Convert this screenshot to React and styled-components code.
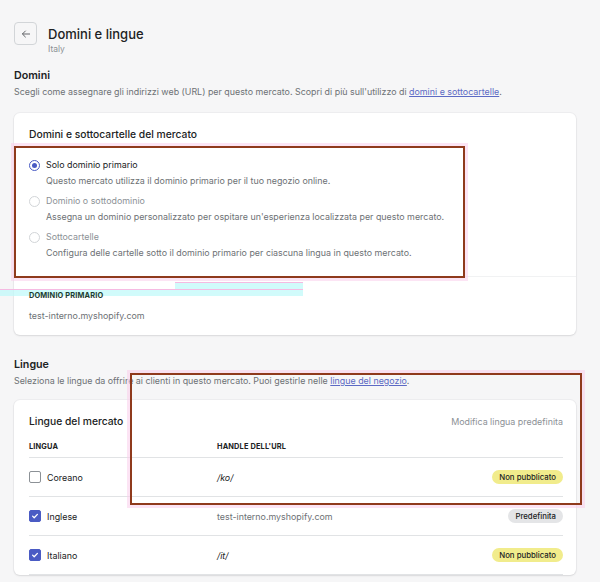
import React from 'react'
import styled, { createGlobalStyle } from 'styled-components'

const Global = createGlobalStyle`
  html, body {
    margin: 0;
    background: #f6f6f7;
    font-family: Inter, "Noto Sans", sans-serif;
    color: #202223;
  }
`

const Page = styled.div`
  position: relative;
  width: 600px;
  height: 582px;
  overflow: hidden;
  box-sizing: border-box;
  padding: 22px 24px 0 14px;
`

const Header = styled.div`
  display: flex;
  align-items: flex-start;
  gap: 11px;
`

const BackButton = styled.button`
  width: 23px;
  height: 23px;
  padding: 0;
  border: 1px solid #d2d5d8;
  border-radius: 4px;
  background: #f6f6f7;
  display: flex;
  align-items: center;
  justify-content: center;
  color: #5c5f62;
`

const TitleBlock = styled.div`
  display: flex;
  flex-direction: column;
  padding-top: 3px;
`

const Title = styled.h1`
  margin: 0;
  font-size: 13px;
  line-height: 18px;
  font-weight: 500;
`

const Subtitle = styled.div`
  font-size: 8.5px;
  line-height: 13px;
  color: #8c9196;
`

const Section = styled.section`
  margin-top: ${p => p.$top}px;
`

const SectionTitle = styled.h2`
  margin: 0;
  font-size: 10.7px;
  line-height: 16px;
  font-weight: 600;
`

const SectionText = styled.p`
  margin: 1px 0 0;
  font-size: 8.9px;
  line-height: 14px;
  color: #6d7175;
`

const Link = styled.a`
  color: #5c6ac4;
  text-decoration: underline;
`

const Card = styled.div`
  margin-top: ${p => p.$top}px;
  background: #fff;
  border-radius: 6px;
  box-shadow: 0 0 0 1px rgba(63, 63, 68, 0.04), 0 1px 2px rgba(63, 63, 68, 0.12);
  overflow: hidden;
`

const CardBody = styled.div`
  padding: ${p => p.$pad || '13px 14px 14px 15px'};
`

const CardHead = styled.div`
  display: flex;
  justify-content: space-between;
  align-items: center;
`

const CardTitle = styled.h3`
  margin: 0;
  font-size: 10.3px;
  line-height: 16px;
  font-weight: 500;
`

const Action = styled.span`
  font-size: 8.9px;
  color: #8c9196;
`

const RadioList = styled.div`
  display: flex;
  flex-direction: column;
  gap: 4px;
  margin-top: 15px;
`

const RadioRow = styled.div`
  display: grid;
  grid-template-columns: 17px 1fr;
  align-items: center;
`

const Radio = styled.span`
  width: 9px;
  height: 9px;
  border-radius: 50%;
  border: 1px solid ${p => (p.$on ? '#4a5bc4' : '#d2d5d8')};
  box-sizing: content-box;
  display: flex;
  align-items: center;
  justify-content: center;
  &::after {
    content: '';
    width: 5px;
    height: 5px;
    border-radius: 50%;
    background: ${p => (p.$on ? '#4a5bc4' : 'transparent')};
  }
`

const RadioLabel = styled.span`
  font-size: 8.9px;
  line-height: 16px;
  color: ${p => (p.$muted ? '#8c9196' : '#202223')};
`

const RadioHelp = styled.span`
  grid-column: 2;
  font-size: 8.9px;
  line-height: 16px;
  color: #6d7175;
`

const Divider = styled.div`
  height: 1px;
  background: #f1f2f3;
`

const Eyebrow = styled.div`
  position: relative;
  z-index: 2;
  font-size: 7.4px;
  line-height: 12px;
  font-weight: 700;
  letter-spacing: 0.15px;
  text-transform: uppercase;
  color: #1d3b2f;
`

const Value = styled.div`
  margin-top: 7px;
  font-size: 8.9px;
  line-height: 14px;
  color: #6d7175;
`

const Table = styled.div`
  margin-top: 12px;
`

const TableHead = styled.div`
  display: grid;
  grid-template-columns: 188px 1fr auto;
  height: 16px;
  align-items: start;
  border-bottom: 1px solid #e1e3e5;
`

const Th = styled.span`
  font-size: 7.4px;
  font-weight: 700;
  letter-spacing: 0.15px;
  color: #202223;
  line-height: 12px;
`

const Row = styled.div`
  display: grid;
  grid-template-columns: 188px 1fr auto;
  height: 38px;
  align-items: center;
  border-bottom: 1px solid #e1e3e5;
`

const LangCell = styled.span`
  display: flex;
  align-items: center;
  gap: 6px;
  font-size: 8.9px;
  color: #202223;
`

const Checkbox = styled.span`
  width: 10px;
  height: 10px;
  border-radius: 2px;
  border: 1px solid ${p => (p.$on ? '#4a5bc4' : '#8c9196')};
  background: ${p => (p.$on ? '#4a5bc4' : '#fff')};
  display: flex;
  align-items: center;
  justify-content: center;
`

const Handle = styled.span`
  font-size: 8.9px;
  color: ${p => (p.$plain ? '#6d7175' : '#202223')};
  font-style: ${p => (p.$plain ? 'normal' : 'italic')};
`

const Badge = styled.span`
  font-size: 7.8px;
  line-height: 14px;
  padding: 0 7px;
  border-radius: 8px;
  font-weight: 500;
  background: ${p => (p.$tone === 'warn' ? '#f1ec8c' : '#e4e5e7')};
  color: #202223;
`

const Mark = styled.div`
  position: absolute;
  box-sizing: border-box;
  left: ${p => p.$x}px;
  top: ${p => p.$y}px;
  width: ${p => p.$w}px;
  height: ${p => p.$h}px;
  border: 2px solid #8f3a1c;
  box-shadow: 0 0 0 3px rgba(250, 205, 235, 0.55);
  pointer-events: none;
`

const Ghost = styled.div`
  position: absolute;
  z-index: 1;
  left: ${p => p.$x}px;
  top: ${p => p.$y}px;
  width: ${p => p.$w}px;
  height: ${p => p.$h}px;
  background: rgba(190, 250, 250, 0.7);
  border-top: 1px solid rgba(255, 170, 220, 0.8);
  pointer-events: none;
`

const Tick = () => (
  <svg width="8" height="8" viewBox="0 0 10 10">
    <path d="M2 5.2l2 2L8 3" fill="none" stroke="#fff" strokeWidth="1.6" strokeLinecap="round" strokeLinejoin="round" />
  </svg>
)

const options = [
  { label: 'Solo dominio primario', help: 'Questo mercato utilizza il dominio primario per il tuo negozio online.', on: true },
  { label: 'Dominio o sottodominio', help: "Assegna un dominio personalizzato per ospitare un'esperienza localizzata per questo mercato." },
  { label: 'Sottocartelle', help: 'Configura delle cartelle sotto il dominio primario per ciascuna lingua in questo mercato.' },
]

const languages = [
  { name: 'Coreano', handle: '/ko/', badge: 'Non pubblicato', tone: 'warn' },
  { name: 'Inglese', handle: 'test-interno.myshopify.com', badge: 'Predefinita', on: true, plain: true },
  { name: 'Italiano', handle: '/it/', badge: 'Non pubblicato', tone: 'warn', on: true },
]

export default function App() {
  return (
    <Page>
      <Global />
      <Header>
        <BackButton aria-label="Indietro">
          <svg width="12" height="12" viewBox="0 0 20 20">
            <path d="M16 10H4.5M9 5l-5 5 5 5" fill="none" stroke="currentColor" strokeWidth="1.6" strokeLinecap="round" strokeLinejoin="round" />
          </svg>
        </BackButton>
        <TitleBlock>
          <Title>Domini e lingue</Title>
          <Subtitle>Italy</Subtitle>
        </TitleBlock>
      </Header>

      <Section $top={12}>
        <SectionTitle>Domini</SectionTitle>
        <SectionText>
          Scegli come assegnare gli indirizzi web (URL) per questo mercato. Scopri di più sull'utilizzo di{' '}
          <Link href="#">domini e sottocartelle</Link>.
        </SectionText>
      </Section>

      <Card $top={14}>
        <CardBody $pad="13px 14px 15px 15px">
          <CardTitle>Domini e sottocartelle del mercato</CardTitle>
          <RadioList>
            {options.map(o => (
              <RadioRow key={o.label}>
                <Radio $on={o.on} />
                <RadioLabel $muted={!o.on}>{o.label}</RadioLabel>
                <RadioHelp>{o.help}</RadioHelp>
              </RadioRow>
            ))}
          </RadioList>
        </CardBody>
        <Divider />
        <CardBody $pad="13px 14px 12px 15px">
          <Eyebrow>Dominio primario</Eyebrow>
          <Value>test-interno.myshopify.com</Value>
        </CardBody>
      </Card>

      <Section $top={22}>
        <SectionTitle>Lingue</SectionTitle>
        <SectionText>
          Seleziona le lingue da offrire ai clienti in questo mercato. Puoi gestirle nelle{' '}
          <Link href="#">lingue del negozio</Link>.
        </SectionText>
      </Section>

      <Card $top={12}>
        <CardBody $pad="13px 13px 0 15px">
          <CardHead>
            <CardTitle>Lingue del mercato</CardTitle>
            <Action>Modifica lingua predefinita</Action>
          </CardHead>
          <Table>
            <TableHead>
              <Th>LINGUA</Th>
              <Th>HANDLE DELL'URL</Th>
              <span />
            </TableHead>
            {languages.map(l => (
              <Row key={l.name}>
                <LangCell>
                  <Checkbox $on={l.on}>{l.on && <Tick />}</Checkbox>
                  {l.name}
                </LangCell>
                <Handle $plain={l.plain}>{l.handle}</Handle>
                <Badge $tone={l.tone}>{l.badge}</Badge>
              </Row>
            ))}
          </Table>
        </CardBody>
      </Card>

      <Mark $x={14} $y={146} $w={451} $h={132} />
      <Mark $x={130} $y={373} $w={452} $h={132} />
      <Ghost $x={175} $y={282} $w={128} $h={6} />
      <Ghost $x={0} $y={289} $w={303} $h={6} />
    </Page>
  )
}
